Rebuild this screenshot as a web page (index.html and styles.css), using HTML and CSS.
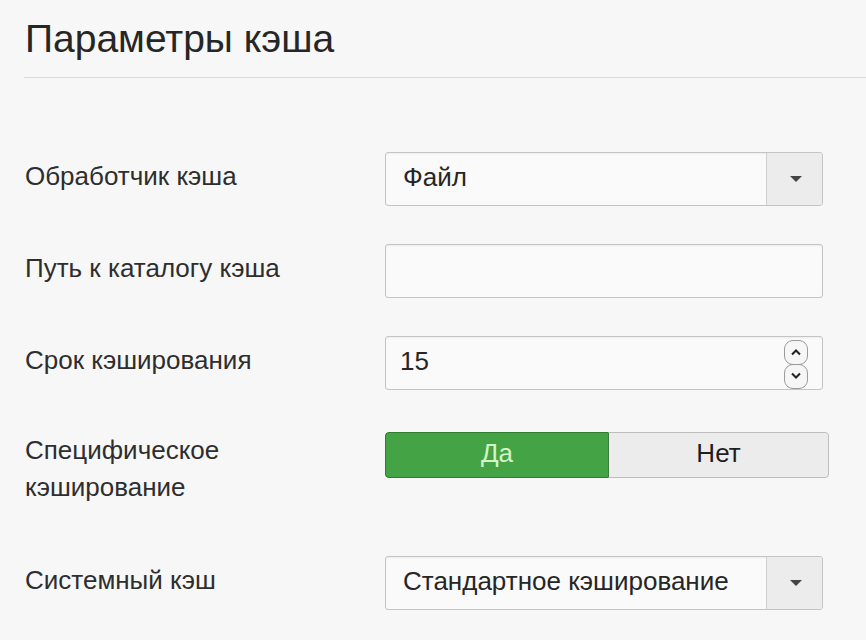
FILE: index.html
```html
<!DOCTYPE html>
<html lang="ru">
<head>
<meta charset="utf-8">
<title>Параметры кэша</title>
<link rel="stylesheet" href="styles.css">
</head>
<body>
<div class="page">
  <h1 class="title">Параметры кэша</h1>
  <div class="form">
    <div class="row">
      <div class="label">Обработчик кэша</div>
      <div class="select">
        <span class="select-value">Файл</span>
        <span class="select-btn"><span class="caret"></span></span>
      </div>
    </div>
    <div class="row">
      <div class="label">Путь к каталогу кэша</div>
      <div class="input"></div>
    </div>
    <div class="row">
      <div class="label">Срок кэширования</div>
      <div class="input input-number">
        <span class="input-value">15</span>
        <span class="spinner">
          <span class="spin">
            <svg width="12" height="8" viewBox="0 0 12 8"><path d="M2 6.5 L6 2.5 L10 6.5" fill="none" stroke="#222" stroke-width="2"/></svg>
          </span>
          <span class="spin">
            <svg width="12" height="8" viewBox="0 0 12 8"><path d="M2 1.5 L6 5.5 L10 1.5" fill="none" stroke="#222" stroke-width="2"/></svg>
          </span>
        </span>
      </div>
    </div>
    <div class="row row-toggle">
      <div class="label label-top">Специфическое кэширование</div>
      <div class="toggle">
        <span class="toggle-opt toggle-on">Да</span>
        <span class="toggle-opt toggle-off">Нет</span>
      </div>
    </div>
    <div class="row">
      <div class="label">Системный кэш</div>
      <div class="select">
        <span class="select-value">Стандартное кэширование</span>
        <span class="select-btn"><span class="caret"></span></span>
      </div>
    </div>
  </div>
</div>
</body>
</html>
```

FILE: styles.css
```css
html, body {
  margin: 0;
  padding: 0;
  background: #f7f7f7;
}
body {
  font-family: "Liberation Sans", Arial, sans-serif;
  color: #222;
}
.page {
  padding: 0 0 0 24px;
}
.title {
  margin: 0;
  padding: 14px 0 0 1px;
  height: 63px;
  font-size: 39px;
  font-weight: normal;
  line-height: 50px;
  color: #262626;
  border-bottom: 1px solid #dadada;
}
.form {
  display: flex;
  flex-direction: column;
  gap: 38px;
  padding: 74px 0 0 1px;
}
.row {
  display: flex;
  align-items: flex-start;
}
.row-toggle {
  margin: 4px 0 12px;
}
.label {
  width: 360px;
  flex: none;
  font-size: 26px;
  line-height: 37px;
  padding-top: 6px;
  color: #2e2e2e;
}
.label-top {
  padding-top: 0;
  width: 250px;
  margin-right: 110px;
}
.select, .input {
  box-sizing: border-box;
  width: 438px;
  height: 54px;
  border: 1px solid #c4c4c4;
  border-radius: 3px;
  background: #fafafa;
  box-shadow: inset 0 1px 2px rgba(0,0,0,0.06);
  display: flex;
  align-items: center;
  font-size: 26px;
  color: #262626;
}
.select-value {
  flex: 1;
  padding-left: 17px;
  padding-bottom: 4px;
}
.select-btn {
  width: 55px;
  align-self: stretch;
  border-left: 1px solid #d0d0d0;
  background: #ececec;
  display: flex;
  align-items: center;
  justify-content: center;
  border-radius: 0 2px 2px 0;
}
.caret {
  width: 0;
  height: 0;
  border-left: 6px solid transparent;
  border-right: 6px solid transparent;
  border-top: 6px solid #444;
  margin-left: 2px;
}
.input-number {
  justify-content: space-between;
  padding: 0 14px 0 14px;
}
.input-value {
  font-size: 26px;
  padding-bottom: 4px;
}
.spinner {
  display: flex;
  flex-direction: column;
  align-self: center;
  margin-top: 2px;
}
.spin {
  width: 24px;
  height: 25px;
  box-sizing: border-box;
  border: 1px solid #9a9a9a;
  border-radius: 9px;
  background: #f6f6f6;
  display: flex;
  align-items: center;
  justify-content: center;
}
.spin + .spin {
  margin-top: -1px;
}
.toggle {
  display: flex;
  width: 444px;
  height: 46px;
  box-sizing: border-box;
  border-radius: 4px;
  overflow: hidden;
  font-size: 26px;
}
.toggle-opt {
  flex: 1;
  display: flex;
  align-items: center;
  justify-content: center;
  padding-bottom: 4px;
}
.toggle-on {
  flex: 0 0 222px;
  background: #44a344;
  color: #d4f5c8;
  border: 1px solid #2f7d30;
  border-right: none;
  border-radius: 4px 0 0 4px;
}
.toggle-off {
  background: #ececec;
  color: #1e1e1e;
  border: 1px solid #bdbdbd;
  border-left: 1px solid #3d7a3d;
  border-radius: 0 4px 4px 0;
}
```
